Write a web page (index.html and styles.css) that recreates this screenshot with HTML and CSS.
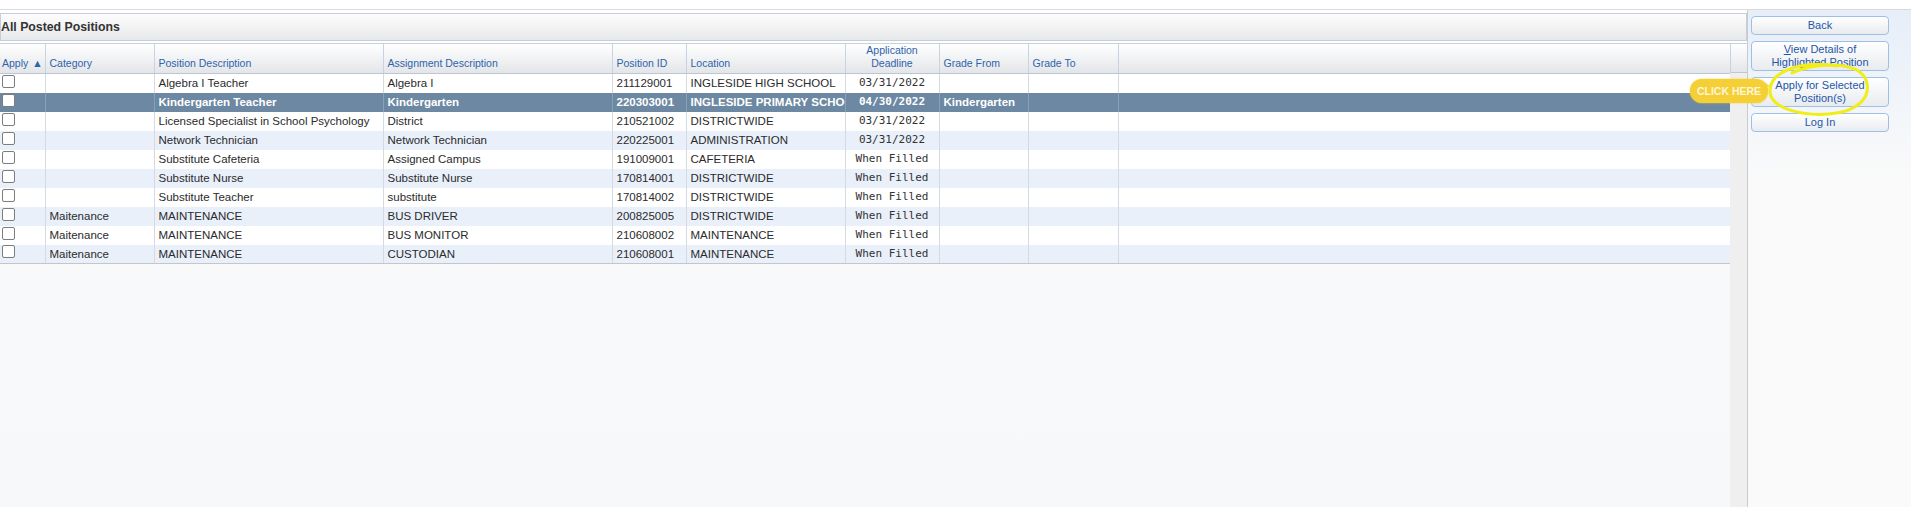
FILE: index.html
```html
<html>
<head>
    <meta charset="utf-8">
    <title>All Posted Positions</title>
    <link rel="stylesheet" href="styles.css">
</head>
<body>

<div class="topline"></div>

<div class="main">
    <div class="left">
        <div class="titlebar">All Posted Positions</div>

        <div class="grid">
            <div class="gridBody">
                <table class="positions" cellpadding=0 cellspacing=0>
                    <colgroup>
                        <col style="width:45px"><col style="width:109px"><col style="width:229px">
                        <col style="width:229px"><col style="width:74px"><col style="width:159px">
                        <col style="width:94px"><col style="width:89px"><col style="width:90px"><col>
                    </colgroup>
                    <thead>
                        <tr>
                            <th class="first">Apply <span class="sort">&#9650;</span></th>
                            <th>Category</th>
                            <th>Position Description</th>
                            <th>Assignment Description</th>
                            <th>Position ID</th>
                            <th>Location</th>
                            <th class="center">Application<br>Deadline</th>
                            <th>Grade From</th>
                            <th>Grade To</th>
                            <th class="filler"></th>
                        </tr>
                    </thead>
                    <tbody>
                        <tr>
                            <td class="first"><input type=checkbox class="chk"></td><td></td>
                            <td>Algebra I Teacher</td><td>Algebra I</td><td>211129001</td>
                            <td>INGLESIDE HIGH SCHOOL</td><td class="date">03/31/2022</td><td></td><td></td><td></td>
                        </tr>
                        <tr class="selected">
                            <td class="first"><input type=checkbox class="chk"></td><td></td>
                            <td>Kindergarten Teacher</td><td>Kindergarten</td><td>220303001</td>
                            <td>INGLESIDE PRIMARY SCHOOL</td><td class="date">04/30/2022</td><td>Kindergarten</td><td></td><td></td>
                        </tr>
                        <tr>
                            <td class="first"><input type=checkbox class="chk"></td><td></td>
                            <td>Licensed Specialist in School Psychology</td><td>District</td><td>210521002</td>
                            <td>DISTRICTWIDE</td><td class="date">03/31/2022</td><td></td><td></td><td></td>
                        </tr>
                        <tr class="alt">
                            <td class="first"><input type=checkbox class="chk"></td><td></td>
                            <td>Network Technician</td><td>Network Technician</td><td>220225001</td>
                            <td>ADMINISTRATION</td><td class="date">03/31/2022</td><td></td><td></td><td></td>
                        </tr>
                        <tr>
                            <td class="first"><input type=checkbox class="chk"></td><td></td>
                            <td>Substitute Cafeteria</td><td>Assigned Campus</td><td>191009001</td>
                            <td>CAFETERIA</td><td class="date">When Filled</td><td></td><td></td><td></td>
                        </tr>
                        <tr class="alt">
                            <td class="first"><input type=checkbox class="chk"></td><td></td>
                            <td>Substitute Nurse</td><td>Substitute Nurse</td><td>170814001</td>
                            <td>DISTRICTWIDE</td><td class="date">When Filled</td><td></td><td></td><td></td>
                        </tr>
                        <tr>
                            <td class="first"><input type=checkbox class="chk"></td><td></td>
                            <td>Substitute Teacher</td><td>substitute</td><td>170814002</td>
                            <td>DISTRICTWIDE</td><td class="date">When Filled</td><td></td><td></td><td></td>
                        </tr>
                        <tr class="alt">
                            <td class="first"><input type=checkbox class="chk"></td><td>Maitenance</td>
                            <td>MAINTENANCE</td><td>BUS DRIVER</td><td>200825005</td>
                            <td>DISTRICTWIDE</td><td class="date">When Filled</td><td></td><td></td><td></td>
                        </tr>
                        <tr>
                            <td class="first"><input type=checkbox class="chk"></td><td>Maitenance</td>
                            <td>MAINTENANCE</td><td>BUS MONITOR</td><td>210608002</td>
                            <td>MAINTENANCE</td><td class="date">When Filled</td><td></td><td></td><td></td>
                        </tr>
                        <tr class="alt last">
                            <td class="first"><input type=checkbox class="chk"></td><td>Maitenance</td>
                            <td>MAINTENANCE</td><td>CUSTODIAN</td><td>210608001</td>
                            <td>MAINTENANCE</td><td class="date">When Filled</td><td></td><td></td><td></td>
                        </tr>
                    </tbody>
                </table>
            </div>
            <div class="vscroll"><div class="vscrollHead"></div></div>
        </div>
    </div>

    <div class="side">
        <button class="btn">Back</button>
        <button class="btn tall"><u>V</u>iew Details of<br>Highlighted Position</button>
        <button class="btn tall">Apply for Selected<br>Position(s)</button>
        <button class="btn">Log In</button>
    </div>
</div>

<!-- annotation drawn over the screenshot -->
<div class="callout">CLICK HERE</div>
<svg class="ring" width="120" height="64" viewBox="0 0 120 64">
    <path d="M 76 7 C 44 1, 10 11, 9 31 C 8 50, 42 57, 68 55 C 97 53, 111 38, 105 21 C 100 8, 80 4, 56 7 C 46 8, 38 11, 31 14" fill="none" stroke="#f1ed16" stroke-width="3" stroke-linecap="round"/>
    <path d="M 7 27 L 0 22" fill="none" stroke="#f3d43a" stroke-width="2" stroke-linecap="round"/>
</svg>

</body>
</html>
```

FILE: styles.css
```css
BODY {
    margin: 0;
    background: #ffffff;
    font-family: "Liberation Sans", Arial, Helvetica, sans-serif;
    color: #333;
    overflow: hidden;
}

.topline {
    height: 9px;
    border-bottom: 1px solid #d9dadc;
}

.main {
    display: flex;
    height: 497px;
}

.left {
    width: 1747px;
    border-right: 1px solid #c9cbce;
    padding-top: 3px;
    display: flex;
    flex-direction: column;
}

.titlebar {
    box-sizing: border-box;
    height: 28px;
    border: 1px solid #c6cfd9;
    background: linear-gradient(#fdfdfd, #e7e8ea);
    font-size: 12.3px;
    font-weight: bold;
    color: #333;
    line-height: 26px;
    padding-left: 0;
}

.grid {
    margin-top: 2px;
    flex: 1;
    display: flex;
    border-top: 1px solid #c6d2de;
}

.gridBody {
    width: 1730px;
    background: linear-gradient(#fafafa, #f7f8fa);
}

.vscroll {
    flex: 1;
    background: #efefef;
}
.vscrollHead {
    height: 28px;
    border-bottom: 1px solid #b9c7d6;
    border-left: 1px solid #c5d3e2;
    background: linear-gradient(#ffffff, #e3e5e8);
}

TABLE.positions {
    width: 1730px;
    table-layout: fixed;
    border-collapse: collapse;
}

.positions th {
    height: 28px;
    padding: 0 0 3px 4px;
    vertical-align: bottom;
    text-align: left;
    font-weight: normal;
    font-size: 10.5px;
    line-height: 13px;
    color: #2f63ab;
    background: linear-gradient(#ffffff, #e3e5e8);
    border-left: 1px solid #c5d3e2;
    border-bottom: 1px solid #b9c7d6;
    white-space: nowrap;
    overflow: hidden;
}
.positions th.first { border-left: 0; padding-left: 2px; }
.positions th.center { text-align: center; padding-left: 0; }
.sort { font-size: 10.5px; color: #2f63ab; margin-left: 1px; }

.positions td {
    height: 19px;
    padding: 0 0 0 4px;
    font-size: 11.5px;
    line-height: 18px;
    color: #2b2b2b;
    background: #ffffff;
    border-left: 1px solid #d4dae1;
    white-space: nowrap;
    overflow: hidden;
}
.positions td.first { border-left: 0; padding-left: 2px; }
.positions tr.alt td { background: #e9f0fa; }
.positions tr.last td { border-bottom: 1px solid #c3c7cc; }

.positions td.date {
    text-align: center;
    padding-left: 0;
    font-family: "DejaVu Sans Mono", "Liberation Mono", monospace;
    font-size: 11px;
    color: #333;
}

.positions tr.selected td {
    background: #6c88a2;
    color: #ffffff;
    font-weight: bold;
    border-left-color: #8aa0b5;
}

.chk {
    -webkit-appearance: none;
    appearance: none;
    box-sizing: border-box;
    width: 13px;
    height: 13px;
    margin: 0;
    border: 1px solid #7d7d7d;
    border-radius: 2px;
    background: #ffffff;
    vertical-align: middle;
    position: relative;
    top: -2px;
}

.side {
    flex: 1;
    padding: 6px 0 0 3px;
    display: flex;
    flex-direction: column;
    gap: 6px;
    background: linear-gradient(#e6eef8 0, #f1f5fa 90px, #fafafa 170px);
}

.btn {
    box-sizing: border-box;
    width: 138px;
    height: 19px;
    padding: 0;
    border: 1px solid #9fc0e4;
    border-radius: 4px;
    background: linear-gradient(#ffffff, #e8ebef);
    font-family: "Liberation Sans", Arial, sans-serif;
    font-size: 11px;
    line-height: 13px;
    color: #1f56a8;
    text-align: center;
}
.btn.tall { height: 30px; }

.callout {
    position: absolute;
    left: 1690px;
    top: 79px;
    width: 78px;
    height: 24px;
    border-radius: 12px;
    background: #f4cf36;
    box-shadow: 0 0 2px #f4cf36;
    color: #fff6d8;
    font-family: "Liberation Sans", Arial, sans-serif;
    font-weight: bold;
    font-size: 10.5px;
    line-height: 24px;
    text-align: center;
}

.ring {
    position: absolute;
    left: 1761px;
    top: 59px;
}
```
